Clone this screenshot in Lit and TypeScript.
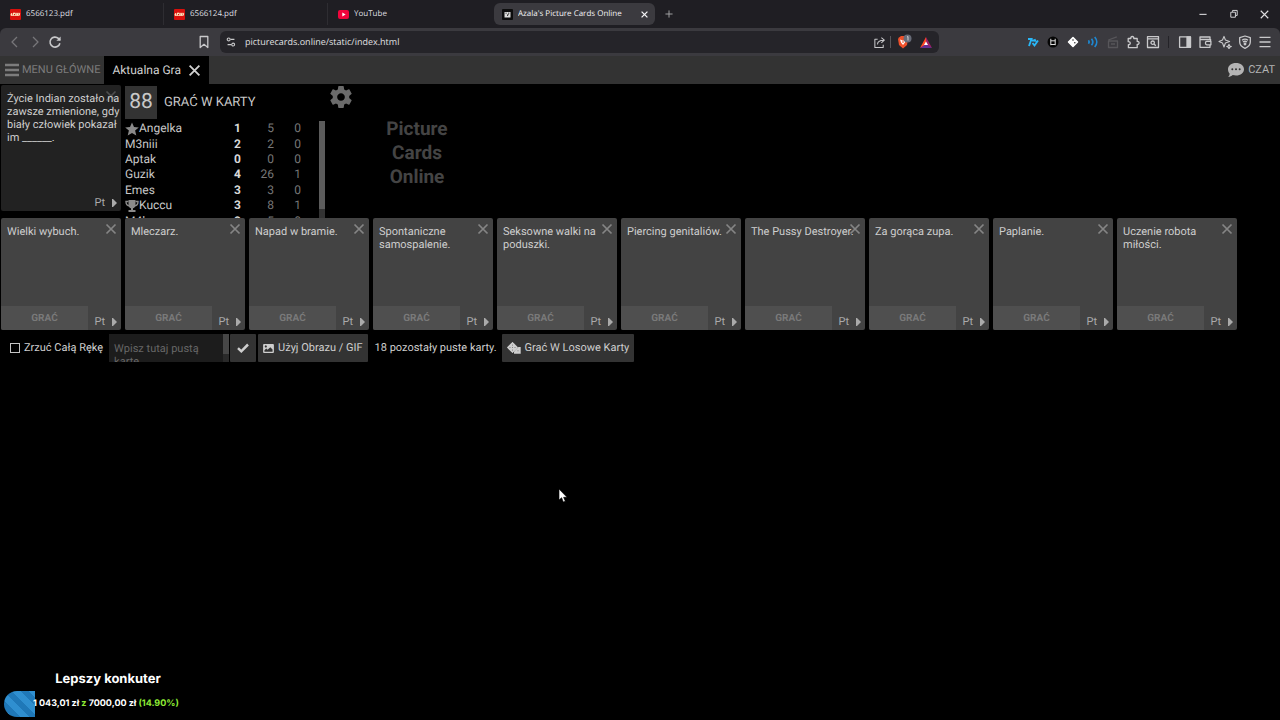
import { LitElement, html, svg, css, nothing } from "lit";
import { customElement, property, state } from "lit/decorators.js";

const cross = html`<svg viewBox="0 0 12 12" width="12" height="12" aria-hidden="true">
  <path d="M1.5 1.5 10.5 10.5M10.5 1.5 1.5 10.5" fill="none" stroke="currentColor" stroke-width="1.7" />
</svg>`;

const line = (paths: unknown, size = 14, width = 1.3) => html`<svg
  viewBox="0 0 14 14"
  width=${size}
  height=${size}
  fill="none"
  stroke="currentColor"
  stroke-width=${width}
  stroke-linejoin="round"
  aria-hidden="true"
>${paths}</svg>`;

const icons = {
  back: line(svg`<path d="M9 2 4 7l5 5" />`),
  forward: line(svg`<path d="M5 2l5 5-5 5" />`),
  reload: line(svg`<path d="M11.9 8.2A5 5 0 1 1 10.4 3.4L12 5" stroke-width="1.6" /><path d="M12.6 1.6v4.2H8.4z" fill="currentColor" stroke="none" />`),
  bookmark: line(svg`<path d="M3.2 1.5h7.6v11L7 9.3l-3.8 3.2z" />`),
  tune: line(svg`<circle cx="4.3" cy="4" r="1.7" /><path d="M6.5 4H11M3 10h4.3" /><circle cx="9.5" cy="10" r="1.7" />`, 12),
  share: line(svg`<path d="M5 3.5H2v9h9V9.5M4.8 9C5 5.800 7 4.500 11.500 4.500M9 1.700l3.200 2.800L9 7.400" />`, 13, 1.1),
  puzzle: line(svg`<path d="M2.200 3.500h2.600c-.5-2.700 3.500-2.700 3 0h3.400v3c2.500-.4 2.500 3.200 0 2.900v3.300H2.400V9.600c2.500.3 2.500-3.200-.2-2.900z" />`),
  findBox: line(svg`<path d="M1.500 1.700h11v10.800h-11zM1.500 3.800h11" /><circle cx="6.700" cy="7.700" r="1.700" /><path d="M8 9l1.800 1.700" />`),
  sidebar: line(svg`<path d="M1.600 1.900h10.800v10.400H1.600z" /><path d="M9 2h3.500v10.300H9z" fill="currentColor" />`),
  wallet: line(svg`<path d="M12 4.500V2H2v10.300h10V10M2 4.500h10.600v1.800M12.900 6.300H8.800c-1.800 0-1.800 3.500 0 3.500h4.100z" />`),
  leo: line(svg`<path d="M6 1.400 7.400 5 11.600 6.500 7.400 8 6 12 4.500 8 1 6.500 4.500 5zM11 9.300l.7 1.700 1.600.6-1.600.7-.7 1.500-.7-1.500-1.500-.7 1.500-.6z" stroke-width="1.100" />`),
  vpn: line(svg`<path d="M7 1 12.300 2.600V7c0 3-2.200 5-5.300 6.300C3.900 12 1.700 10 1.700 7V2.600z" /><path d="M4 5.200c2-1.500 4-1.500 6 0M5 7c1.300-1 2.700-1 4 0" /><circle cx="7" cy="9" r=".8" fill="currentColor" />`),
  menu: line(svg`<path d="M1.500 2.300h11M1.500 7h11M1.500 11.700h11" />`),
  copy: line(svg`<path d="M2.500 4.500h6.500v7H2.500zM5 4V2h6.500v7H9.500" />`, 10),
  plus: line(svg`<path d="M7 2v10M2 7h10" />`, 10),
  minimise: line(svg`<path d="M2 7.500h10" />`, 10, 1.5),
};

const pdf = html`<svg viewBox="0 0 11 11" width="11" height="11" aria-hidden="true">
  <rect width="11" height="11" rx="1" fill="#d8100c" />
  <path d="M1 6.500 1.700 4.300M3 6.500l.6-2.200h1.300M5.600 6.500l.6-2.200M7.200 6.500l.6-2.200M9 6.500l.6-2.200" stroke="#ffe9c0" stroke-width="1.300" fill="none" />
  <path d="M1 6.500h8M3.500 4.300h6.400" stroke="#ffe9c0" stroke-width=".7" />
</svg>`;
const tube = html`<svg viewBox="0 0 11 11" width="11" height="11" aria-hidden="true">
  <rect y="1" width="11" height="9" rx="2" fill="#f0053c" /><path d="M4.300 3.500v4l3.300-2z" fill="#fff" />
</svg>`;
const cardsIcon = html`<svg viewBox="0 0 11 11" width="11" height="11" aria-hidden="true">
  <rect width="11" height="11" rx="1" fill="#0d0d0d" /><path d="M2.500 3h6v5.500h-6z" fill="#ddd" />
  <path d="M3.500 4.200h1.200M6 4.200h1.300M5.500 7V5.700h1.300" stroke="#111" stroke-width=".8" fill="none" />
</svg>`;

const burger = html`<svg viewBox="0 0 16 14" width="16" height="14" aria-hidden="true">
  <path d="M1 2h14M1 7h14M1 12h14" stroke="currentColor" stroke-width="2.400" />
</svg>`;
const chat = html`<svg viewBox="0 0 18 16" width="18" height="16" aria-hidden="true">
  <path d="M9 1c4.600 0 8 2.700 8 6.300s-3.400 6.300-8 6.300c-1.200 0-2.300-.2-3.300-.5C4.600 14 3 15 1.200 15c.9-1 1.400-2.200 1.500-3.300C1.600 10.500 1 9 1 7.300 1 3.700 4.400 1 9 1z" fill="currentColor" />
  <circle cx="5.300" cy="7.300" r="1" fill="#333" /><circle cx="9" cy="7.300" r="1" fill="#333" /><circle cx="12.700" cy="7.300" r="1" fill="#333" />
</svg>`;
const gear = html`<svg viewBox="2 2 20 20" width="22" height="22" aria-hidden="true">
  <path fill="currentColor" d="M19.430 12.980c.04-.32.07-.64.07-.98s-.03-.66-.07-.98l2.110-1.650c.19-.15.240-.42.120-.64l-2-3.460c-.12-.22-.39-.3-.61-.22l-2.490 1c-.52-.4-1.080-.73-1.690-.98l-.38-2.650A.488.488 0 0 0 14 2h-4c-.25 0-.46.180-.49.420l-.38 2.650c-.61.250-1.170.590-1.690.980l-2.490-1c-.23-.09-.49 0-.61.220l-2 3.460c-.13.220-.07.490.120.640l2.110 1.650c-.04.320-.07.650-.07.980s.03.660.070.980l-2.110 1.650c-.19.150-.24.420-.12.640l2 3.460c.12.220.390.300.610.220l2.490-1c.52.400 1.080.730 1.690.980l.38 2.650c.03.240.240.420.490.420h4c.25 0 .46-.18.490-.42l.38-2.650c.61-.25 1.170-.59 1.690-.98l2.490 1c.23.090.490 0 .61-.22l2-3.460c.12-.22.070-.49-.12-.64l-2.110-1.650zM12 15.500c-1.930 0-3.500-1.570-3.500-3.500s1.570-3.500 3.500-3.500 3.500 1.570 3.500 3.500-1.570 3.500-3.500 3.500z" />
</svg>`;
const star = html`<svg viewBox="0 0 14 14" width="14" height="14" aria-hidden="true">
  <path d="M7 .5 9 5l4.800.4-3.700 3.200 1.200 4.900L7 10.900l-4.300 2.600 1.200-4.900L.2 5.400 5 5z" fill="currentColor" />
</svg>`;
const trophy = html`<svg viewBox="0 0 14 14" width="14" height="14" aria-hidden="true">
  <path d="M3.500 1h7v5.500c0 1.500-1.300 2.500-2.500 2.800V11h2.500v2h-7v-2H6V9.300C4.800 9 3.500 8 3.500 6.500z" fill="currentColor" />
  <path d="M3.500 2.500H1c0 2.500.8 4 3 4.300M10.500 2.500H13c0 2.500-.8 4-3 4.300" fill="none" stroke="currentColor" stroke-width="1.400" />
</svg>`;
const tick = html`<svg viewBox="0 0 12 10" width="12" height="10" aria-hidden="true">
  <path d="M1 5.200 4.300 8.300 11 1.500" fill="none" stroke="currentColor" stroke-width="2.500" />
</svg>`;
const image = html`<svg viewBox="0 0 12 10" width="11" height="9" aria-hidden="true">
  <path fill-rule="evenodd" fill="currentColor" d="M1 0h10a1 1 0 0 1 1 1v8a1 1 0 0 1-1 1H1a1 1 0 0 1-1-1V1a1 1 0 0 1 1-1zM1.500 8.500h9V6L8 3.500l-3 3L3.500 5 1.500 7zM3 1.500a1.200 1.200 0 1 0 .01 0z" />
</svg>`;
const dice = html`<svg viewBox="0 0 14 12" width="14" height="12" aria-hidden="true">
  <path d="M5.500.3 10.700 5.500 5.500 10.700.3 5.500z" fill="currentColor" stroke="currentColor" stroke-linejoin="round" />
  <path d="M11.500 5h2.200v6.700H7V9.500z" fill="currentColor" />
  <g fill="#666"><circle cx="5.500" cy="3" r=".5" /><circle cx="3" cy="5.500" r=".5" /><circle cx="5.500" cy="5.500" r=".5" /><circle cx="8" cy="5.500" r=".5" /><circle cx="5.500" cy="8" r=".5" /><circle cx="11" cy="8.800" r=".5" /></g>
</svg>`;

const reset = css`
  :host {
    text-rendering: geometricPrecision;
  }
  button {
    border: 0;
    padding: 0;
    margin: 0;
    background: none;
    color: inherit;
    font: inherit;
    text-rendering: inherit;
    cursor: pointer;
  }
  svg {
    display: block;
    flex: none;
  }
`;

@customElement("browser-chrome")
class BrowserChrome extends LitElement {
  static styles = [
    reset,
    css`
      :host {
        display: block;
        background: #1f1e23;
        color: #dedee0;
        font: 8px/14px "Open Sans", "Noto Sans", sans-serif;
      }
      .tabs {
        display: flex;
        align-items: center;
        height: 28px;
      }
      .tab {
        display: flex;
        align-items: center;
        gap: 5px;
        flex: 0 1 164px;
        box-sizing: border-box;
        height: 22px;
        padding: 0 8px 0 10px;
      }
      .divided {
        border-right: 1px solid #2e2d32;
      }
      .tab.active {
        flex-basis: 161px;
        margin-left: 2px;
        padding: 0 7px 0 8px;
        background: #3b3a3f;
        border-radius: 6px;
        color: #f4f4f6;
      }
      .title {
        flex: 1;
        overflow: hidden;
        white-space: nowrap;
      }
      .add {
        margin-left: 9px;
        color: #a8a8aa;
      }
      .window {
        display: flex;
        align-items: center;
        gap: 21px;
        margin-left: auto;
        padding-right: 11px;
      }
      .toolbar {
        display: flex;
        align-items: center;
        height: 28px;
        background: #3b3a3f;
        border-radius: 6px 6px 0 0;
        color: #c9c9cb;
        font-size: 9px;
      }
      .nav {
        display: flex;
        gap: 6px;
        padding-left: 8px;
      }
      .dim {
        color: #77767a;
      }
      .mark {
        margin-left: auto;
        padding-right: 9px;
      }
      .left {
        display: flex;
        align-items: center;
        flex: 0 0 220px;
      }
      .address {
        display: flex;
        align-items: center;
        gap: 8px;
        box-sizing: border-box;
        flex: 0 1 719px;
        height: 22px;
        padding: 0 7px 0 5px;
        background: #252429;
        border-radius: 6px;
      }
      .url {
        flex: 1;
        min-width: 0;
        border: 0;
        padding: 0;
        background: none;
        color: #e0e0e2;
        font: inherit;
        text-rendering: inherit;
      }
      .rule {
        width: 1px;
        height: 12px;
        background: #56555a;
      }
      .address .rule {
        margin: 0 -3px 0 -4px;
      }
      .tools {
        display: flex;
        align-items: center;
        gap: 6px;
        margin-left: auto;
        padding-right: 8px;
      }
      .tools .rule {
        margin: 0 3px 0 2px;
        background: #242328;
      }
      .faint {
        color: #57565a;
      }
    `,
  ];

  render() {
    return html`
      <nav class="tabs" aria-label="Karty przeglądarki">
        <div class="tab divided">${pdf}<span class="title">6566123.pdf</span></div>
        <div class="tab divided">${pdf}<span class="title">6566124.pdf</span></div>
        <div class="tab">${tube}<span class="title">YouTube</span></div>
        <div class="tab active">
          ${cardsIcon}<span class="title">Azala's Picture Cards Online</span>
          <button aria-label="Zamknij kartę"><svg viewBox="0 0 12 12" width="7" height="7"><path d="M1 1l10 10M11 1 1 11" stroke="currentColor" stroke-width="2.200" /></svg></button>
        </div>
        <button class="add" aria-label="Nowa karta">${icons.plus}</button>
        <div class="window">
          <button aria-label="Minimalizuj">${icons.minimise}</button>
          <button aria-label="Przywróć">${icons.copy}</button>
          <button aria-label="Zamknij"><svg viewBox="0 0 12 12" width="9" height="9"><path d="M1 1l10 10M11 1 1 11" stroke="currentColor" stroke-width="1.500" /></svg></button>
        </div>
      </nav>
      <div class="toolbar">
        <div class="left">
          <div class="nav">
            <button class="dim" aria-label="Wstecz">${icons.back}</button>
            <button class="dim" aria-label="Dalej">${icons.forward}</button>
            <button aria-label="Odśwież">${icons.reload}</button>
          </div>
          <button class="mark" aria-label="Dodaj zakładkę">${icons.bookmark}</button>
        </div>
        <div class="address">
          ${icons.tune}
          <input class="url" aria-label="Adres" value="picturecards.online/static/index.html" />
          <button aria-label="Udostępnij">${icons.share}</button>
          <span class="rule"></span>
          <svg viewBox="0 0 16 16" width="16" height="16" aria-hidden="true">
            <path d="M3 3.500 5 2h4l2 1.500 1 1.500-1 6-4 3.500L3 11 2 5z" fill="#f0502a" />
            <path d="M4 5.500l3 1 3-1-1 3-2 2.500-2-2.500z" fill="#fff" /><path d="M7 6.500v2.500" stroke="#f0502a" />
            <circle cx="11.500" cy="4.500" r="4" fill="#676b78" /><path d="M11 3l1-.5v4" fill="none" stroke="#ddd" stroke-width=".9" />
          </svg>
          <svg viewBox="0 0 12 11" width="12" height="11" aria-hidden="true">
            <path d="M6 0 0 11l6-3z" fill="#ff4724" /><path d="M6 0l6 11-6-3z" fill="#9e1f63" /><path d="M0 11h12L6 7z" fill="#662d91" /><path d="M6 4.500 8 8H4z" fill="#fff" />
          </svg>
        </div>
        <div class="tools">
          <svg viewBox="0 0 14 14" width="14" height="14" aria-hidden="true"><path d="M2 4h3.500L3 11M6 5.500h2.500M6.500 8l2 2.500L12 5.500M8.500 4.200l1.200 2.500" fill="none" stroke="#29b6f6" stroke-width="1.900" /></svg>
          <svg viewBox="0 0 14 14" width="14" height="14" aria-hidden="true"><circle cx="7" cy="7" r="5.500" fill="#050505" /><path d="M4.800 3.800v6.400M9.200 3.800v6.400M4.800 5.800h4.400M4.800 9.500h4.400" stroke="#ddd" fill="none" /></svg>
          <svg viewBox="0 0 14 14" width="14" height="14" aria-hidden="true"><path d="M7 2.500 11.500 7 7 11.500 2.500 7z" fill="#fff" stroke="#fff" stroke-width="1.500" stroke-linejoin="round" /><circle cx="7" cy="5" r=".8" fill="#333" /><circle cx="8.800" cy="7.800" r=".8" fill="#333" /></svg>
          <svg viewBox="0 0 14 14" width="14" height="14" aria-hidden="true" fill="none" stroke="#1e88d2" stroke-width="1.700"><path d="M2.500 5.300c.8 1 .8 2.400 0 3.400M5.500 3.700c1.600 2 1.600 4.600 0 6.600M8.700 2c2.700 3 2.700 7 0 10" /></svg>
          <span class="faint">${line(svg`<path d="M2.500 6h9v6.500h-9zM2.300 5l8.500-3.200M5 9h4" />`)}</span>
          ${icons.puzzle} ${icons.findBox}
          <span class="rule"></span>
          ${icons.sidebar} ${icons.wallet} ${icons.leo} ${icons.vpn}
          <button aria-label="Menu">${icons.menu}</button>
        </div>
      </div>
    `;
  }
}

@customElement("game-card")
class GameCard extends LitElement {
  @property() text = "";
  @property({ type: Boolean, reflect: true }) prompt = false;

  static styles = [
    reset,
    css`
      :host {
        display: flex;
        flex-direction: column;
        position: relative;
        box-sizing: border-box;
        width: 120px;
        height: 112px;
        background: #434343;
        border-radius: 2px;
        overflow: hidden;
        color: #cecece;
        font: 11px/13px Roboto, sans-serif;
      }
      :host([prompt]) {
        height: 126px;
        background: #222;
      }
      .text {
        flex: 1;
        margin: 0;
        padding: 7px 0 0 6px;
      }
      .close {
        position: absolute;
        top: 5px;
        right: 4px;
        color: #858585;
      }
      :host([prompt]) .close {
        color: #4f4f4f;
        z-index: -1;
      }
      :host([prompt]) {
        isolation: isolate;
      }
      .foot {
        display: flex;
        align-items: flex-end;
        height: 24px;
      }
      .play {
        width: 87px;
        height: 24px;
        background: #4f4f4f;
        color: #7a7a7a;
        font-size: 10px;
        font-weight: 700;
      }
      .lang {
        display: flex;
        align-items: center;
        gap: 7px;
        margin-left: auto;
        padding: 0 4px 2px 0;
        color: #aaa;
      }
    `,
  ];

  render() {
    return html`
      <p class="text">${this.text}</p>
      <button class="close" aria-label="Odrzuć">${cross}</button>
      <div class="foot">
        ${this.prompt ? nothing : html`<button class="play">GRAĆ</button>`}
        <button class="lang">
          Pt
          <svg viewBox="0 0 5 8" width="5" height="8" aria-hidden="true"><path d="M0 0h1l4 4-4 4H0z" fill="currentColor" /></svg>
        </button>
      </div>
    `;
  }
}

interface Player {
  name: string;
  scores: [number, number, number];
  badge?: "star" | "trophy";
}

@customElement("score-board")
class ScoreBoard extends LitElement {
  players: Player[] = [
    { name: "Angelka", scores: [1, 5, 0], badge: "star" },
    { name: "M3niii", scores: [2, 2, 0] },
    { name: "Aptak", scores: [0, 0, 0] },
    { name: "Guzik", scores: [4, 26, 1] },
    { name: "Emes", scores: [3, 3, 0] },
    { name: "Kuccu", scores: [3, 8, 1], badge: "trophy" },
    { name: "M4lezec", scores: [2, 5, 0] },
  ];

  static styles = [
    reset,
    css`
      :host {
        display: flex;
        flex-direction: column;
        width: 227px;
        color: #c8c8c8;
        font: 12px/15px Roboto, sans-serif;
      }
      .head {
        display: flex;
        align-items: center;
        gap: 7px;
        padding: 1px 0 2px;
      }
      .timer {
        width: 32px;
        background: #333;
        font-size: 21px;
        line-height: 33px;
        text-align: center;
      }
      .phase {
        flex: 1;
        margin: 0;
        font-size: 13px;
        font-weight: 400;
      }
      .settings {
        align-self: flex-start;
        color: #6b6b6b;
      }
      .list {
        display: flex;
        justify-content: space-between;
        flex: 1;
        min-height: 0;
        width: 200px;
        overflow: hidden;
      }
      table {
        width: 176px;
        height: 108px;
        border-collapse: collapse;
      }
      th,
      td {
        padding: 0;
        text-align: right;
        font-weight: 400;
        width: 27px;
        color: #777;
      }
      th {
        width: auto;
        text-align: left;
        color: #c8c8c8;
      }
      .player {
        display: flex;
        align-items: center;
      }
      .player svg {
        color: #8a8a8a;
      }
      .round {
        width: 27px;
        color: #d8d8d8;
        font-weight: 700;
      }
      .total {
        width: 33px;
      }
      .bar {
        width: 6px;
        background: #333;
      }
      .thumb {
        height: 88px;
        background: #5c5c5c;
      }
    `,
  ];

  render() {
    return html`
      <div class="head">
        <span class="timer">88</span>
        <h1 class="phase">GRAĆ W KARTY</h1>
        <button class="settings" aria-label="Ustawienia">${gear}</button>
      </div>
      <div class="list">
        <table aria-label="Wyniki">
          <tbody>
            ${this.players.map(
              (p) => html`<tr>
                <th scope="row">
                  <span class="player">${p.badge === "star" ? star : p.badge === "trophy" ? trophy : nothing}${p.name}</span>
                </th>
                <td class="round">${p.scores[0]}</td>
                <td class="total">${p.scores[1]}</td>
                <td>${p.scores[2]}</td>
              </tr>`
            )}
          </tbody>
        </table>
        <div class="bar"><div class="thumb"></div></div>
      </div>
    `;
  }
}

@customElement("app-root")
class AppRoot extends LitElement {
  @state() private hand = [
    "Wielki wybuch.",
    "Mleczarz.",
    "Napad w bramie.",
    "Spontaniczne samospalenie.",
    "Seksowne walki na poduszki.",
    "Piercing genitaliów.",
    "The Pussy Destroyer.",
    "Za gorąca zupa.",
    "Paplanie.",
    "Uczenie robota miłości.",
  ];

  static styles = [
    reset,
    css`
      :host {
        display: block;
        position: relative;
        min-height: 100vh;
        background: #000;
        color: #cecece;
        font: 11px/14px Roboto, sans-serif;
      }
      .menu {
        display: flex;
        align-items: stretch;
        height: 28px;
        background: #333;
      }
      .main,
      .current,
      .chat {
        display: flex;
        align-items: center;
      }
      .main {
        gap: 2px;
        padding: 0 4px;
        color: #7c7c7c;
      }
      .current {
        gap: 7px;
        padding: 0 8px;
        background: #000;
        color: #d0d0d0;
        font-size: 12px;
      }
      .current svg {
        width: 13px;
        height: 13px;
      }
      .chat {
        gap: 3px;
        margin-left: auto;
        padding: 0 5px;
        color: #b4b4b4;
      }
      .table {
        display: flex;
        align-items: stretch;
        gap: 4px;
        box-sizing: border-box;
        height: 134px;
        padding: 1px 1px 0;
        overflow: hidden;
      }
      .brand {
        width: 80px;
        margin: 32px 0 0 21px;
        color: #444;
        font-size: 19px;
        font-weight: 700;
        line-height: 24px;
        text-align: center;
      }
      .hand {
        display: flex;
        flex-wrap: wrap;
        gap: 4px;
        padding: 0 1px;
      }
      .actions {
        display: flex;
        flex-wrap: wrap;
        align-items: center;
        padding: 4px 10px;
      }
      .discard {
        display: flex;
        align-items: center;
        gap: 4px;
        margin-right: 6px;
      }
      .box {
        appearance: none;
        width: 10px;
        height: 10px;
        margin: 0;
        border: 1px solid #c4c4c4;
      }
      .box:checked {
        background: #c4c4c4;
      }
      .blank {
        display: flex;
        margin-right: 1px;
        background: #1c1c1c;
      }
      .entry {
        display: block;
        box-sizing: border-box;
        width: 114px;
        height: 28px;
        padding: 8px 0 0 5px;
        border: 0;
        resize: none;
        overflow: hidden;
        background: none;
        color: #c4c4c4;
        font: 11px/13px Roboto, sans-serif;
        text-rendering: inherit;
      }
      .entry::placeholder {
        color: #666;
      }
      .scroll {
        width: 6px;
        background: #2a2a2a;
      }
      .thumb {
        height: 20px;
        background: #474747;
      }
      .btn {
        display: flex;
        align-items: center;
        gap: 4px;
        height: 28px;
        margin-right: 2px;
        padding: 0 5px;
        background: #333;
        border-radius: 1px;
      }
      .confirm {
        padding: 0 7px;
      }
      .left {
        margin: 0 5px;
      }
      .goal {
        position: absolute;
        left: 4px;
        bottom: 3px;
        width: 208px;
        color: #fff;
        font: 700 9px/26px Inter, sans-serif;
      }
      .goal-name {
        margin: 0;
        font-size: 13px;
        line-height: 24px;
        text-align: center;
      }
      .goal-bar {
        display: grid;
        align-items: center;
        border-radius: 13px 0 0 13px;
        overflow: hidden;
      }
      .fill,
      .amount {
        grid-area: 1 / 1;
      }
      .fill {
        height: 26px;
        background: repeating-linear-gradient(45deg, #2f8fd0 0 6px, #1f78b8 6px 12px);
      }
      .amount {
        padding-left: 29px;
        white-space: nowrap;
      }
      .green {
        color: #8eea35;
      }
      .pointer {
        position: absolute;
        left: 558px;
        top: 488px;
      }
    `,
  ];

  render() {
    const progress = 14.9;
    return html`
      <browser-chrome></browser-chrome>
      <nav class="menu">
        <button class="main">${burger}MENU GŁÓWNE</button>
        <button class="current">Aktualna Gra${cross}</button>
        <button class="chat">${chat}CZAT</button>
      </nav>
      <main>
        <section class="table">
          <game-card prompt text="Życie Indian zostało na zawsze zmienione, gdy biały człowiek pokazał im ______."></game-card>
          <score-board></score-board>
          <div class="brand">Picture Cards Online</div>
        </section>
        <section class="hand">${this.hand.map((t) => html`<game-card .text=${t}></game-card>`)}</section>
        <section class="actions">
          <label class="discard"><input class="box" type="checkbox" />Zrzuć Całą Rękę</label>
          <div class="blank">
            <textarea class="entry" aria-label="Pusta karta" placeholder="Wpisz tutaj pustą kartę"></textarea>
            <div class="scroll"><div class="thumb"></div></div>
          </div>
          <button class="btn confirm" aria-label="Zatwierdź">${tick}</button>
          <button class="btn">${image}Użyj Obrazu / GIF</button>
          <span class="left">18 pozostały puste karty.</span>
          <button class="btn">${dice}Grać W Losowe Karty</button>
        </section>
      </main>
      <aside class="goal">
        <p class="goal-name">Lepszy konkuter</p>
        <div class="goal-bar">
          <div class="fill" style="width:${progress}%"></div>
          <div class="amount">1 043,01 zł <span class="green">z</span> 7000,00 zł <span class="green">(14.90%)</span></div>
        </div>
      </aside>
      <svg class="pointer" viewBox="0 0 10 15" width="10" height="15" aria-hidden="true">
        <path d="M1 1v11l2.600-2.300L5.300 14l2-.8L5.600 9.300H9z" fill="#fff" stroke="#000" stroke-width=".6" />
      </svg>
    `;
  }
}
